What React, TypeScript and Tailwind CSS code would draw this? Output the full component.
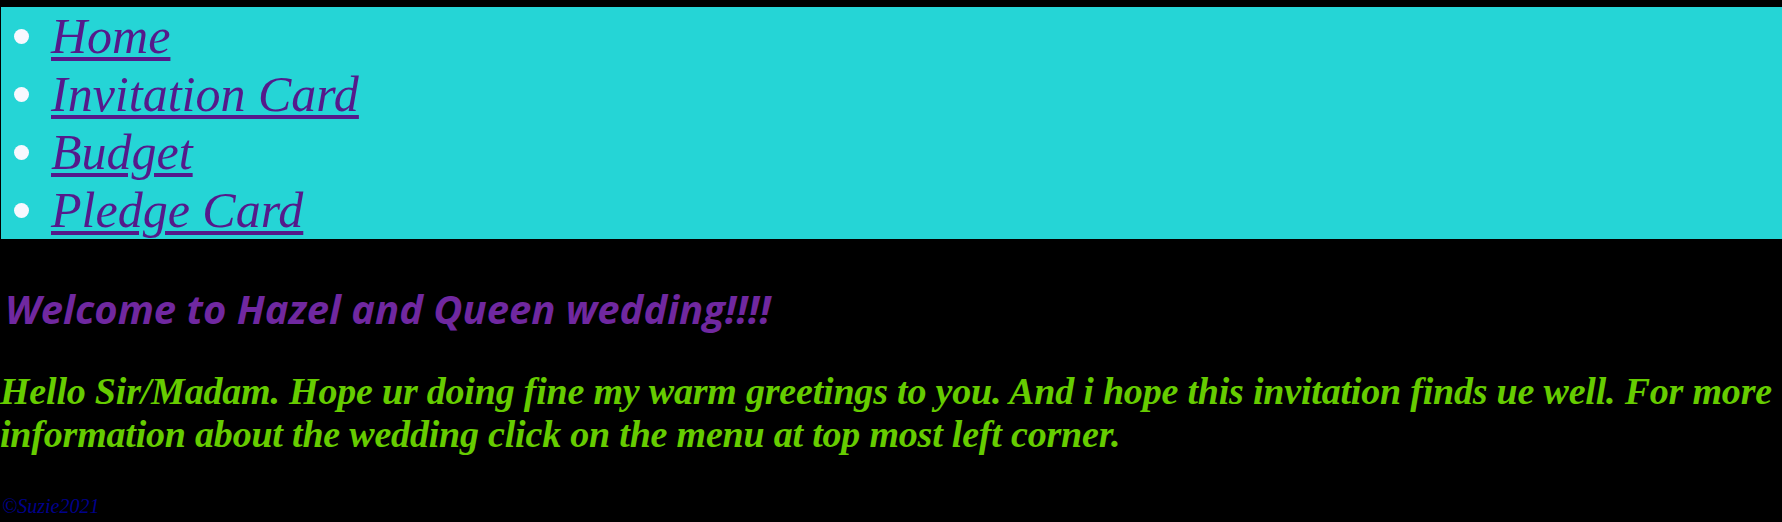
import * as React from 'react'

const links = ['Home', 'Invitation Card', 'Budget', 'Pledge Card']

export default function App() {
  return (
    <div className="min-h-screen w-full overflow-hidden bg-black">
      {/* menu */}
      <ul className="ml-[1px] mt-[7px] bg-[#25d5d6] pl-0 font-['Liberation_Serif',serif] text-[50px] italic leading-[58px]">
        {links.map((label) => (
          <li key={label} className="flex items-center">
            <span className="ml-[13px] mr-[22px] h-[15px] w-[15px] rounded-full bg-[#f8f8ff]" />
            <a
              href="#"
              className="text-[#551a8b] underline decoration-[4px] underline-offset-[4px]"
            >
              {label}
            </a>
          </li>
        ))}
      </ul>

      <h2 className="ml-[5px] mt-[47px] font-['Open_Sans',sans-serif] text-[40px] font-bold italic leading-[46px] text-[#7028a0]">
        Welcome to Hazel and Queen wedding!!!!
      </h2>

      <p className="mt-[38px] font-['Liberation_Serif',serif] text-[38px] font-bold italic leading-[43px] tracking-[-0.2px] text-[#66cc00]">
        Hello Sir/Madam. Hope ur doing fine my warm greetings to you. And i hope this invitation finds ue well. For more
        information about the wedding click on the menu at top most left corner.
      </p>

      <footer className="ml-[2px] mt-[39px] font-['Liberation_Serif',serif] text-[20px] italic leading-[22px] text-[#00008b]">
        ©Suzie2021
      </footer>
    </div>
  )
}
